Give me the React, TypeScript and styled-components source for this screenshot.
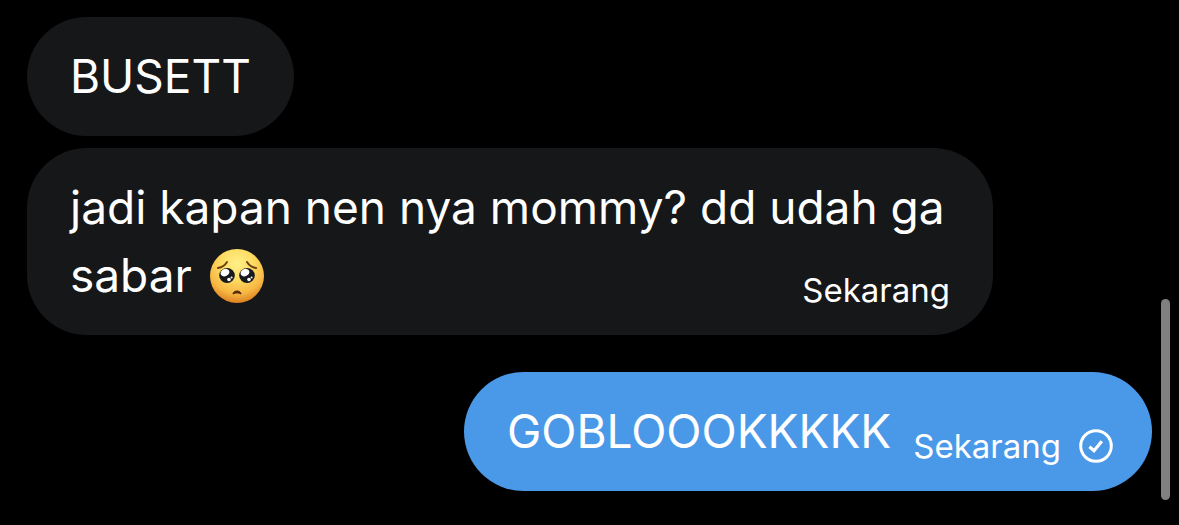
import React from "react";
import styled, { createGlobalStyle } from "styled-components";

const GlobalStyle = createGlobalStyle`
  *, *::before, *::after { box-sizing: border-box; }
  body {
    margin: 0;
    background: #000;
    color: #fff;
    font-family: Inter, "Liberation Sans", sans-serif;
  }
`;

const Conversation = styled.main`
  position: relative;
  min-height: 100vh;
  padding: 17px 27px 33px;
`;

const MessageList = styled.ol`
  display: flex;
  flex-direction: column;
  gap: 12px;
  margin: 0;
  padding: 0;
  list-style: none;
`;

const Bubble = styled.li<{ $own?: boolean }>`
  max-width: calc(100% - 159px);
  margin-top: ${(p) => (p.$own ? "25px" : "0")};
  padding: ${(p) => (p.$own ? "25px 39px 26px 43px" : "25px 43px 26px")};
  align-self: ${(p) => (p.$own ? "flex-end" : "flex-start")};
  border-radius: 60px;
  background: ${(p) => (p.$own ? "#4a99e9" : "#161719")};
`;

const Text = styled.p`
  margin: 0;
  font-size: 46px;
  line-height: 68px;
`;

/* Floats to the end of the last line of the message. */
const Meta = styled.span`
  float: right;
  display: flex;
  align-items: center;
  gap: 18px;
  margin: 30px 0 0 22px;
  font-size: 33px;
  line-height: 38px;
`;

const Emoji = styled.svg`
  width: 56px;
  height: 56px;
  margin-left: 4px;
  vertical-align: -12px;
`;

const SentMark = styled.svg`
  width: 34px;
  height: 34px;
`;

const ScrollThumb = styled.div`
  position: absolute;
  right: 9px;
  bottom: 25px;
  width: 9px;
  height: 201px;
  border-radius: 5px;
  background: #808080;
`;

function PleadingFace() {
  return (
    <Emoji viewBox="0 0 56 56" role="img" aria-label="🥺">
      <defs>
        <radialGradient id="face" cx="0.5" cy="0.27" r="0.74">
          <stop offset="0" stopColor="#fff08a" />
          <stop offset="0.4" stopColor="#fddc62" />
          <stop offset="0.75" stopColor="#f7b743" />
          <stop offset="1" stopColor="#dc7e20" />
        </radialGradient>
      </defs>
      <circle cx="28" cy="28" r="27" fill="url(#face)" />
      <g fill="none" stroke="#6d4010" strokeWidth="2" strokeLinecap="round">
        <path d="M9 20 Q15 19 18 14" />
        <path d="M47 20 Q41 19 38 14" />
      </g>
      <path d="M24 46 C24 42 32 42 32 46 C30 44.500 26 44.500 24 46Z" fill="#54270c" stroke="#54270c" strokeLinejoin="round" />
      <ellipse cx="18" cy="27.500" rx="7.800" ry="7.400" fill="#17191d" />
      <ellipse cx="38" cy="27.500" rx="7.800" ry="7.400" fill="#17191d" />
      <g fill="#fff">
        <ellipse cx="16" cy="24.600" rx="4.600" ry="3.600" transform="rotate(-25 16 24.600)" />
        <ellipse cx="36" cy="24.600" rx="4.600" ry="3.600" transform="rotate(-25 36 24.600)" />
        <circle cx="20" cy="31.500" r="1.800" />
        <circle cx="40" cy="31.500" r="1.800" />
        <circle cx="22.600" cy="29.500" r="1" />
        <circle cx="42.600" cy="29.500" r="1" />
      </g>
    </Emoji>
  );
}

function Sent() {
  return (
    <SentMark viewBox="0 0 34 34" fill="none" stroke="#fff" role="img" aria-label="Terkirim">
      <circle cx="17" cy="17" r="15.300" strokeWidth="3" />
      <path d="M10.400 17.800 L15 21.800 L22.800 12.200" strokeWidth="3.200" />
    </SentMark>
  );
}

export default function App() {
  return (
    <>
      <GlobalStyle />
      <Conversation>
        <MessageList>
          <Bubble>
            <Text>BUSETT</Text>
          </Bubble>
          <Bubble>
            <Text>
              jadi kapan nen nya mommy? dd udah ga sabar <PleadingFace />
              <Meta>Sekarang</Meta>
            </Text>
          </Bubble>
          <Bubble $own>
            <Text>
              GOBLOOOKKKKK
              <Meta>
                Sekarang
                <Sent />
              </Meta>
            </Text>
          </Bubble>
        </MessageList>
        <ScrollThumb />
      </Conversation>
    </>
  );
}
